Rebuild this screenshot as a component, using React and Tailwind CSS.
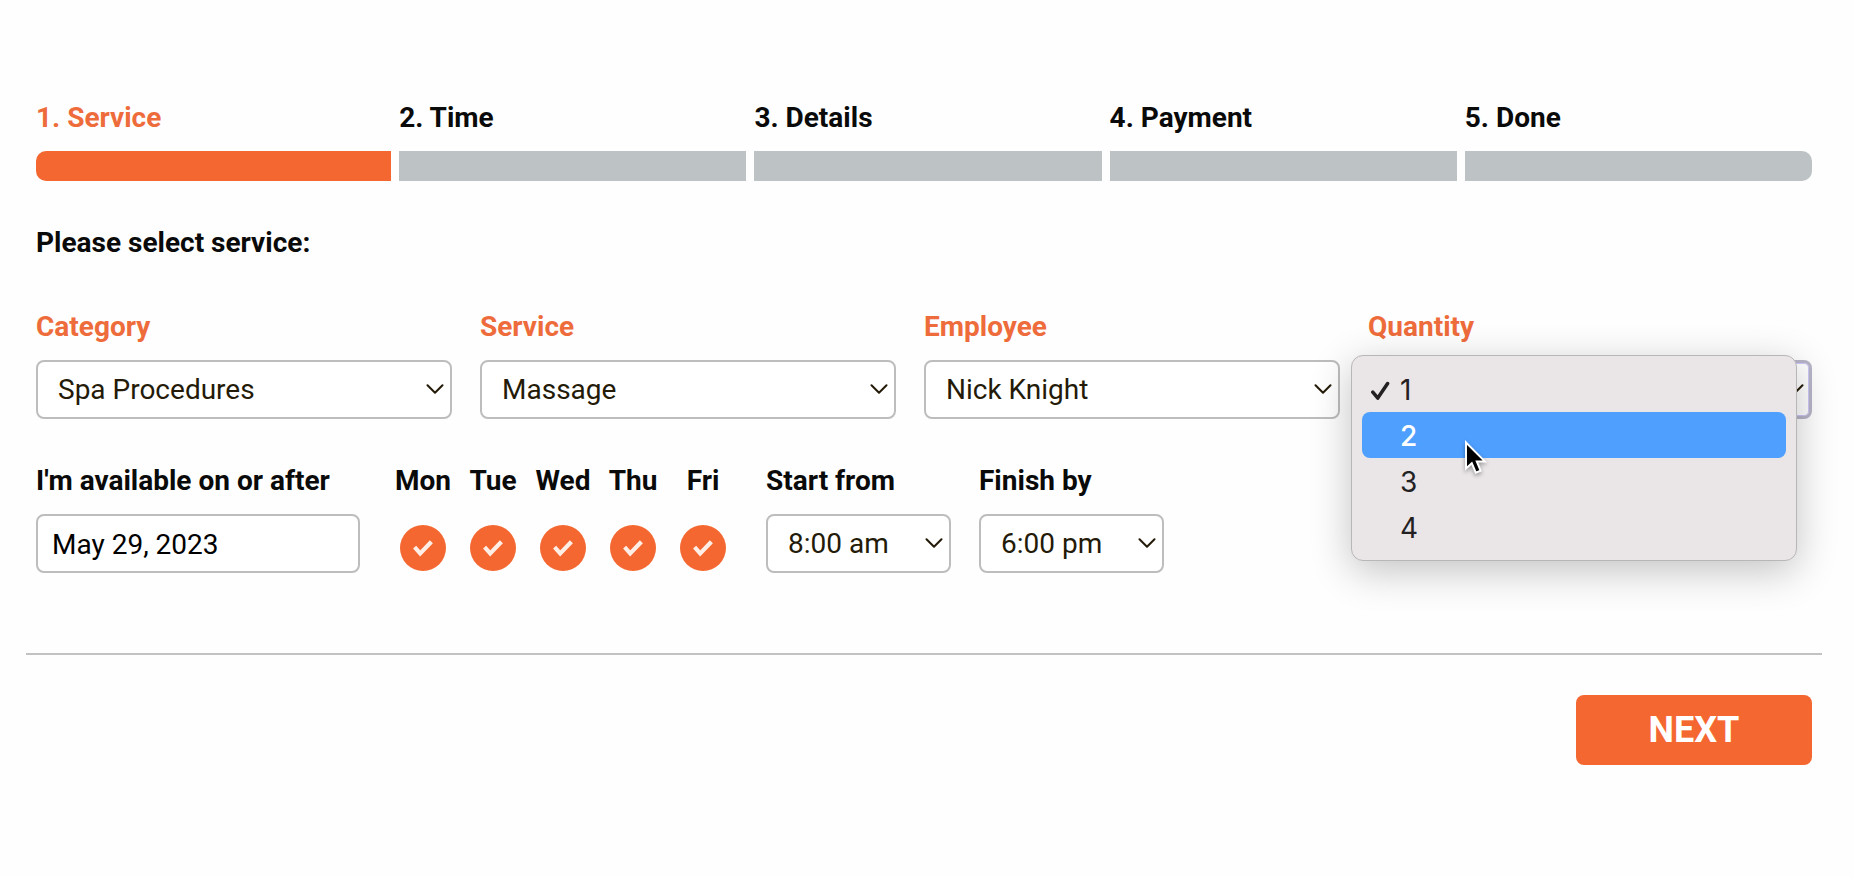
import React from "react";

const steps = ["1. Service", "2. Time", "3. Details", "4. Payment", "5. Done"];
const days = ["Mon", "Tue", "Wed", "Thu", "Fri"];

function Chevron() {
  return (
    <svg
      aria-hidden="true"
      className="pointer-events-none absolute top-6 right-[7px] h-3 w-5"
      viewBox="0 0 20 12"
      fill="none"
      stroke="#241a08"
      strokeWidth="2"
      strokeLinecap="round"
      strokeLinejoin="round"
    >
      <path d="M2.5 1.3 10 8.8 17.5 1.3" />
    </svg>
  );
}

function SelectField({ id, label, options, labelClass = "text-[#ee6c3b]", boxClass = "border-2 border-[#bdbdbd]", children }) {
  return (
    <div className="flex flex-col gap-[17px]">
      <label htmlFor={id} className={`font-bold ${labelClass}`}>
        {label}
      </label>
      <div className="relative">
        <select
          id={id}
          className={`block h-[59px] w-full appearance-none rounded-lg bg-white pt-px pr-8 pl-5 text-[#241a08] outline-none ${boxClass}`}
        >
          {options.map((o) => (
            <option key={o}>{o}</option>
          ))}
        </select>
        <Chevron />
        {children}
      </div>
    </div>
  );
}

function QuantityMenu() {
  return (
    <ul
      role="listbox"
      aria-label="Quantity"
      className="absolute -top-[5px] right-[15px] -left-[17px] z-10 rounded-xl border border-[#b9b6b8] bg-[#eae6e8] p-[10px] font-['Inter',sans-serif] text-[#232122] shadow-[0_10px_40px_rgba(0,0,0,0.24)]"
    >
      {["1", "2", "3", "4"].map((n) => (
        <li
          key={n}
          role="option"
          aria-selected={n === "1"}
          className={`relative flex h-[46px] items-center rounded-lg pt-0.5 pl-[38px] ${n === "2" ? "bg-[#4f9fff] font-medium text-white" : ""}`}
        >
          {n === "1" && (
            <svg
              aria-hidden="true"
              className="absolute top-[14px] left-2 h-5 w-5"
              viewBox="0 0 20 20"
              fill="none"
              stroke="#232122"
              strokeWidth="3.5"
              strokeLinecap="round"
              strokeLinejoin="round"
            >
              <path d="M2.8 12.2 7.8 18.1 17.6 3.5" />
            </svg>
          )}
          {n}
        </li>
      ))}
      <svg
        aria-hidden="true"
        className="absolute top-[82px] left-[110px] h-10 w-7 drop-shadow-[0_2px_2px_rgba(0,0,0,0.35)]"
        viewBox="0 0 28 40"
      >
        <path
          d="M4 4.5V30.5L9.8 25.2 13.8 34.6 18.6 32.6 14.8 23.4H22.8Z"
          fill="#000"
          stroke="#fff"
          strokeWidth="2"
        />
      </svg>
    </ul>
  );
}

export default function App() {
  return (
    <main className="min-h-screen bg-[#fefefe] pt-[102px] pr-8 pb-12 pl-[26px] font-['Roboto',sans-serif] text-[28px] leading-8 text-[#0a0a0a]">
      <form onSubmit={(e) => e.preventDefault()}>
        <div className="px-[10px]">
          <ol className="grid grid-cols-5">
            {steps.map((s, i) => (
              <li key={s} className={`flex flex-col gap-[17px] font-bold ${i === 0 ? "text-[#ee6c3b]" : "pl-2"}`}>
                <span>{s}</span>
                <span
                  className={`h-[30px] ${i === 0 ? "rounded-l-[10px] bg-[#f56730]" : "bg-[#bdc3c5]"} ${i === 4 ? "rounded-r-[10px]" : ""}`}
                />
              </li>
            ))}
          </ol>

          <h2 className="mt-[46px] font-bold">Please select service:</h2>

          <div className="mt-[52px] grid grid-cols-4">
            <div className="pr-7">
              <SelectField id="category" label="Category" options={["Spa Procedures"]} />
            </div>
            <div className="pr-7">
              <SelectField id="service" label="Service" options={["Massage"]} />
            </div>
            <div className="pr-7">
              <SelectField id="employee" label="Employee" options={["Nick Knight"]} />
            </div>
            <SelectField
              id="quantity"
              label="Quantity"
              options={["1", "2", "3", "4"]}
              boxClass="border-[3px] border-[#b7b5c8] shadow-[inset_0_0_0_1px_#cdc8f8]"
            >
              <QuantityMenu />
            </SelectField>
          </div>

          <div className="mt-[46px] flex gap-7">
            <div className="flex w-[324px] flex-col gap-[17px]">
              <label htmlFor="date" className="font-bold">
                I'm available on or after
              </label>
              <input
                id="date"
                type="text"
                defaultValue="May 29, 2023"
                className="h-[59px] w-full rounded-lg border-2 border-[#bdbdbd] bg-white px-[14px] pt-px text-black outline-none"
              />
            </div>

            <div className="flex">
              {days.map((d) => (
                <div key={d} className="flex w-[70px] flex-col items-center gap-7">
                  <label htmlFor={d} className="font-bold">
                    {d}
                  </label>
                  <div className="grid size-[46px] place-items-center">
                    <input
                      id={d}
                      type="checkbox"
                      defaultChecked
                      className="size-[46px] appearance-none rounded-full bg-[#f56730] [grid-area:1/1]"
                    />
                    <svg
                      aria-hidden="true"
                      className="pointer-events-none size-6 [grid-area:1/1]"
                      viewBox="0 0 24 24"
                      fill="none"
                      stroke="#ffeee5"
                      strokeWidth="4.2"
                    >
                      <path d="M3.6 11.2 9.2 17.4 20.4 5.8" />
                    </svg>
                  </div>
                </div>
              ))}
            </div>

            <div className="w-[185px]">
              <SelectField id="start" label="Start from" options={["8:00 am"]} labelClass="" />
            </div>
            <div className="w-[185px]">
              <SelectField id="finish" label="Finish by" options={["6:00 pm"]} labelClass="" />
            </div>
          </div>
        </div>

        <div className="mt-20 flex justify-end border-t-2 border-[#c2c2c2] px-[10px] pt-10">
          <button
            type="submit"
            className="h-[70px] w-[236px] rounded-lg bg-[#f56730] text-4xl font-bold text-white"
          >
            NEXT
          </button>
        </div>
      </form>
    </main>
  );
}
